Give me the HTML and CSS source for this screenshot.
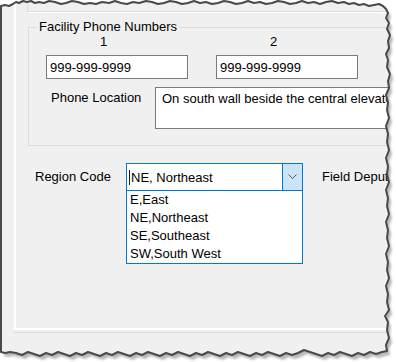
FILE: index.html
```html
<!DOCTYPE html>
<html>
<head>
  <title>Facility - Region Code</title>
  <link rel="stylesheet" href="styles.css">
</head>
<body>
  <div class="screen">
    <div class="window">
      <div class="panel">
        <div class="upper-box"></div>

        <fieldset class="group">
          <legend>Facility Phone Numbers</legend>
          <div class="numbers">
            <div class="num-col">
              <div class="col-label">1</div>
              <input class="textbox" type="text" value="999-999-9999">
            </div>
            <div class="num-col">
              <div class="col-label">2</div>
              <input class="textbox" type="text" value="999-999-9999">
            </div>
          </div>
          <div class="location-row">
            <label class="location-label">Phone Location</label>
            <div class="memo">On south wall beside the central elevator</div>
          </div>
        </fieldset>

        <div class="region-row">
          <label class="region-label">Region Code</label>
          <div class="combo">
            <div class="combo-text"><span class="caret"></span>NE, Northeast</div>
            <div class="combo-btn">
              <svg width="9" height="6" viewBox="0 0 9 6"><path d="M0.5 0.5 L4.5 4.5 L8.5 0.5" fill="none" stroke="#555" stroke-width="1"/></svg>
            </div>
            <ul class="combo-list">
              <li>E,East</li>
              <li>NE,Northeast</li>
              <li>SE,Southeast</li>
              <li>SW,South West</li>
            </ul>
          </div>
          <label class="deputy-label">Field Deputy</label>
        </div>
      </div>
    </div>

    <!-- torn edge frame of the screenshot -->
    <svg class="torn" width="396" height="362" viewBox="0 0 396 362">
      <defs>
        <path id="edge" d="M1,6 L5,5 L9,6 L13,4 L16,2 L19,3 L23,1 L27,2 L31,1 L35,3 L39,2 L44,3 L49,1 L55,2 L61,4 L66,3 L72,1 L78,2 L84,4 L90,3 L96,4 L102,2 L109,3 L115,1 L121,3 L127,4 L133,2 L139,3 L146,1 L152,2 L158,4 L164,3 L170,1 L176,2 L182,4 L188,3 L194,1 L200,3 L206,2 L212,4 L218,3 L224,1 L230,2 L236,4 L242,3 L248,1 L254,3 L260,2 L266,4 L272,3 L278,1 L284,2 L290,4 L296,3 L302,1 L308,3 L314,2 L320,4 L326,2 L332,1 L338,3 L344,2 L349,4 L354,3 L359,5 L364,4 L369,6 L374,5 L379,4 L383,6 L386,9 L388,13 L386,18 L389,23 L387,29 L390,35 L388,41 L389,48 L386,54 L388,60 L387,67 L390,74 L388,81 L389,88 L386,95 L388,102 L387,110 L389,118 L386,126 L388,134 L387,142 L389,150 L386,158 L388,166 L387,174 L389,182 L386,190 L388,198 L387,206 L389,214 L386,222 L388,230 L387,238 L389,246 L386,254 L388,262 L387,270 L389,278 L386,286 L388,294 L387,302 L389,310 L385,316 L388,322 L387,330 L389,338 L386,345 L387,351 L382,352 L376,354 L370,352 L364,355 L358,353 L352,356 L346,354 L340,352 L334,355 L328,353 L322,356 L316,354 L310,352 L304,350 L298,353 L292,355 L286,353 L280,356 L274,354 L268,352 L262,355 L256,353 L250,356 L244,354 L238,352 L232,355 L226,353 L220,356 L214,354 L208,352 L202,355 L196,353 L190,356 L184,354 L178,352 L172,355 L166,353 L160,356 L154,354 L148,352 L142,355 L136,353 L130,356 L124,354 L118,352 L112,355 L106,353 L100,356 L94,354 L88,352 L82,355 L76,353 L70,356 L64,354 L58,352 L52,355 L46,353 L40,356 L34,354 L28,352 L22,355 L16,353 L10,352 L5,353 L1,352 Z"/>
        <mask id="outside">
          <rect width="396" height="362" fill="#fff"/>
          <use href="#edge" fill="#000"/>
        </mask>
        <filter id="soft"><feGaussianBlur stdDeviation="1.2"/></filter>
      </defs>
      <g mask="url(#outside)">
        <rect width="396" height="362" fill="#fff"/>
        <use href="#edge" fill="#b8b8b8" transform="translate(3 4)" filter="url(#soft)"/>
      </g>
      <use href="#edge" fill="none" stroke="#4a4a4a" stroke-width="2" stroke-linejoin="round"/>
    </svg>
  </div>
</body>
</html>
```

FILE: styles.css
```css
body {
  margin: 0;
  background: #fff;
}
.screen {
  position: relative;
  width: 396px;
  height: 362px;
  overflow: hidden;
  background: #f0f0f0;
  font-family: "Liberation Sans", Arial, sans-serif;
  font-size: 13px;
  color: #000;
}
.window {
  height: 362px;
  overflow: hidden;
}
.panel {
  margin-left: 14px;
  width: 420px;
  height: 328px;
  border-left: 2px solid #fff;
  border-bottom: 2px solid #fff;
  box-shadow: 0 2px 0 #f0f0f0, 0 3px 0 #dadada;
}
.upper-box {
  margin-left: 11px;
  height: 11px;
  border-left: 1px solid #dcdcdc;
  border-bottom: 1px solid #dcdcdc;
  box-shadow: 0 1px 0 #fff;
}

/* group box */
.group {
  margin: 8px 0 0 12px;
  padding: 1px 0 16px 17px;
  width: 380px;
  border: 1px solid #dcdcdc;
}
.group legend {
  margin-left: -9px;
  padding: 0 2px;
  line-height: 14px;
}
.numbers {
  display: flex;
  gap: 28px;
}
.num-col {
  width: 142px;
}
.col-label {
  margin-left: 54px;
  line-height: 14px;
}
.textbox {
  display: block;
  box-sizing: border-box;
  width: 142px;
  height: 24px;
  margin: 6px 0 0;
  padding: 0 3px;
  border: 1px solid #7a7a7a;
  background: #fff;
  font: inherit;
  color: #000;
}
.location-row {
  display: flex;
  margin-top: 8px;
}
.location-label {
  width: 104px;
  padding: 3px 0 0 5px;
}
.memo {
  box-sizing: border-box;
  width: 260px;
  height: 42px;
  padding: 3px 6px;
  border: 1px solid #7a7a7a;
  background: #fff;
  white-space: nowrap;
  overflow: hidden;
}

/* region code row */
.region-row {
  display: flex;
  align-items: flex-start;
  margin-top: 17px;
}
.region-label {
  width: 91px;
  margin-left: 19px;
  padding-top: 6px;
}
.combo {
  position: relative;
  display: flex;
  box-sizing: border-box;
  width: 177px;
  height: 28px;
  border: 1px solid #0078d7;
  background: #fff;
}
.combo-text {
  flex: 1;
  display: flex;
  align-items: center;
  padding-left: 2px;
}
.caret {
  width: 1px;
  height: 15px;
  margin-right: 1px;
  background: #1a1a40;
}
.combo-btn {
  display: flex;
  align-items: center;
  justify-content: center;
  width: 19px;
  border-left: 1px solid #0078d7;
  background: #cce4f7;
}
.combo-list {
  position: absolute;
  top: 26px;
  left: -1px;
  box-sizing: border-box;
  width: 177px;
  margin: 0;
  padding: 0;
  list-style: none;
  border: 1px solid #0078d7;
  background: #fff;
}
.combo-list li {
  height: 18px;
  line-height: 18px;
  padding-left: 3px;
}
.deputy-label {
  margin-left: 19px;
  padding-top: 6px;
  white-space: nowrap;
}

.torn {
  position: absolute;
  left: 0;
  top: 0;
  pointer-events: none;
}
```
